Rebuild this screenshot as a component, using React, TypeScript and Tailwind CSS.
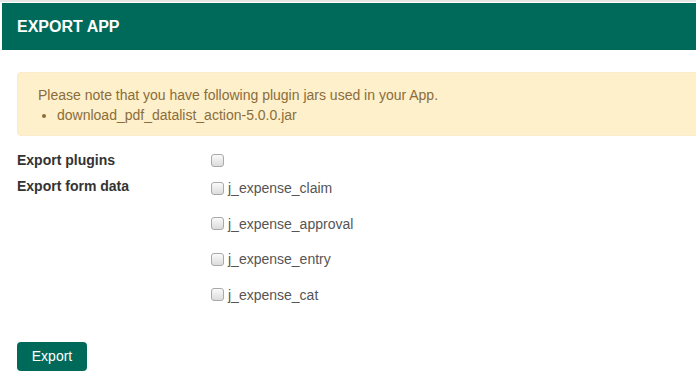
import React from "react";

const tables = ["j_expense_claim", "j_expense_approval", "j_expense_entry", "j_expense_cat"];

function Box() {
  return (
    <span className="inline-block h-[13px] w-[13px] shrink-0 rounded-[3px] border border-[#a9a9a9] bg-gradient-to-b from-[#fafafa] to-[#dcdcdc]" />
  );
}

export default function App() {
  return (
    <div className="h-[381px] w-[696px] overflow-hidden bg-white font-['Liberation_Sans',Arial,sans-serif] text-[14px] text-[#333]">
      <div className="h-[2px] bg-[#e6e6e6]" />
      <div className="h-[1px] bg-white" />
      <div className="ml-[2px] flex h-[47px] items-center bg-[#006a5a] pl-[15px]">
        <h1 className="text-[16px] font-bold text-white">EXPORT APP</h1>
      </div>

      <div className="pl-[17px] pt-[22px]">
        <div className="w-[720px] rounded-[4px] border border-[#faebcc] bg-[#fef0cb] pb-[10px] pl-[20px] pt-[12px] leading-[20px] text-[#8a6d3b]">
          <p>Please note that you have following plugin jars used in your App.</p>
          <ul className="list-disc pl-[19px]">
            <li>download_pdf_datalist_action-5.0.0.jar</li>
          </ul>
        </div>

        <div className="mt-[14px] flex leading-[20px]">
          <div className="w-[194px] font-bold">Export plugins</div>
          <div className="flex items-center pt-[1px]">
            <Box />
          </div>
        </div>

        <div className="mt-[6px] flex leading-[20px]">
          <div className="w-[194px] font-bold">Export form data</div>
          <div className="flex flex-col gap-[15.6px] pt-[2px]">
            {tables.map((t) => (
              <label key={t} className="flex items-center gap-[4px] text-[#555]">
                <Box />
                <span>{t}</span>
              </label>
            ))}
          </div>
        </div>

        <button className="mt-[37px] h-[29px] w-[70px] rounded-[4px] bg-[#006a5a] text-[14px] text-white">
          Export
        </button>
      </div>
    </div>
  );
}
